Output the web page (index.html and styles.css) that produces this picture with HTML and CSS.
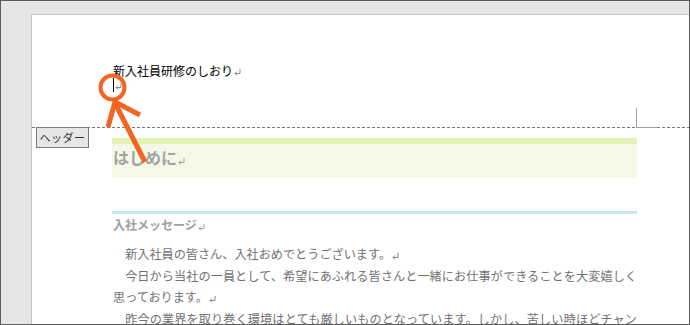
FILE: index.html
```html
<!DOCTYPE html>
<html lang="ja">
<head>
<meta charset="utf-8">
<link rel="stylesheet" href="styles.css">
</head>
<body>
<div class="frame">
  <div class="page">
    <div class="header">
      <div class="hline">新入社員研修のしおり<svg class="ret" viewBox="0 0 7 7" width="7" height="7"><path d="M6 0V4.5H1M3 2.5L1 4.5L3 6.5" fill="none" stroke="#8a8a8a" stroke-width="1"/></svg></div>
      <div class="hline"><span class="cursor"></span><svg class="ret" viewBox="0 0 7 7" width="7" height="7"><path d="M6 0V4.5H1M3 2.5L1 4.5L3 6.5" fill="none" stroke="#8a8a8a" stroke-width="1"/></svg></div>
    </div>
    <div class="rule"></div>
    <div class="body">
      <div class="h1">はじめに<svg class="ret" viewBox="0 0 7 7" width="7" height="7"><path d="M6 0V4.5H1M3 2.5L1 4.5L3 6.5" fill="none" stroke="#a0a0a0" stroke-width="1"/></svg></div>
      <div class="h2">入社メッセージ<svg class="ret" viewBox="0 0 7 7" width="7" height="7"><path d="M6 0V4.5H1M3 2.5L1 4.5L3 6.5" fill="none" stroke="#a0a0a0" stroke-width="1"/></svg></div>
      <p class="para">新入社員の皆さん、入社おめでとうございます。<svg class="ret" viewBox="0 0 7 7" width="7" height="7"><path d="M6 0V4.5H1M3 2.5L1 4.5L3 6.5" fill="none" stroke="#8a8a8a" stroke-width="1"/></svg></p>
      <p class="para">今日から当社の一員として、希望にあふれる皆さんと一緒にお仕事ができることを大変嬉しく思っております。<svg class="ret" viewBox="0 0 7 7" width="7" height="7"><path d="M6 0V4.5H1M3 2.5L1 4.5L3 6.5" fill="none" stroke="#8a8a8a" stroke-width="1"/></svg></p>
      <p class="para">昨今の業界を取り巻く環境はとても厳しいものとなっています。しかし、苦しい時ほどチャンスです。</p>
    </div>
  </div>
  <div class="tag">ヘッダー</div>
  <div class="mark-v"></div>
  <div class="mark-h"></div>
  <svg class="annot" width="690" height="325" viewBox="0 0 690 325">
    <circle cx="112.5" cy="87.5" r="12" fill="none" stroke="#f26522" stroke-width="4"/>
    <line x1="145" y1="162" x2="116" y2="105" stroke="#f26522" stroke-width="5"/>
    <polyline points="108,127 115,102 140,115" fill="none" stroke="#f26522" stroke-width="5" stroke-linejoin="miter"/>
  </svg>
</div>
</body>
</html>
```
FILE: styles.css
```css
* { box-sizing: border-box; }
html, body { margin: 0; padding: 0; background: #fff; }
body { font-family: "Noto Sans CJK JP", "Noto Sans", sans-serif; }

.frame {
  position: relative;
  width: 690px;
  height: 325px;
  border: 1px solid #5c5c5c;
  background: #e6e6e6;
  padding: 13px 0 0 30px;
  overflow: hidden;
}

.page {
  height: 100%;
  background: #fff;
  border-top: 1px solid #c4c4c4;
  border-left: 1px solid #c4c4c4;
}

.header {
  height: 112px;
  padding: 49px 0 0 81px;
}

.hline {
  height: 14px;
  line-height: 14px;
  font-size: 12px;
  color: #000;
  display: flex;
  align-items: center;
}

.ret { flex: none; display: inline-block; margin-left: 1px; vertical-align: -1px; }
.hline .ret { margin-top: 3px; }

.cursor {
  display: inline-block;
  width: 1px;
  height: 14px;
  background: #000;
}

.rule {
  height: 1px;
  background: repeating-linear-gradient(to right, #7a7a7a 0 3px, transparent 3px 5px);
}

.body {
  padding: 10px 0 0 80px;
  width: 605px;
}

.h1 {
  height: 40px;
  border-top: 6px solid #e2f1b4;
  background: #f4f9e6;
  padding: 3px 0 0 1px;
  font-size: 16px;
  line-height: 20px;
  font-weight: 700;
  color: #a3a3a3;
}

.h2 {
  margin-top: 33px;
  border-top: 3px solid #c7e6ef;
  padding: 2px 0 0 1px;
  font-size: 12px;
  line-height: 18px;
  font-weight: 700;
  color: #a0a0a0;
}

.para {
  margin: 0;
  padding-left: 1px;
  font-size: 12.15px;
  line-height: 21.5px;
  color: #727272;
  text-indent: 1em;
  text-align: justify;
}
.h2 + .para { margin-top: 9px; }

.tag {
  position: absolute;
  left: 35px;
  top: 126px;
  width: 53px;
  height: 21px;
  border: 1px solid #7a7a7a;
  background: #e6e6e6;
  font-size: 11px;
  line-height: 19px;
  letter-spacing: 0.5px;
  text-align: center;
  color: #333;
}

.mark-v {
  position: absolute;
  left: 635px;
  top: 107px;
  width: 1px;
  height: 20px;
  background: #a0a0a0;
}
.mark-h {
  position: absolute;
  left: 635px;
  top: 126px;
  width: 21px;
  height: 1px;
  background: #a0a0a0;
}

.annot {
  position: absolute;
  left: -1px;
  top: -1px;
  pointer-events: none;
}
```
